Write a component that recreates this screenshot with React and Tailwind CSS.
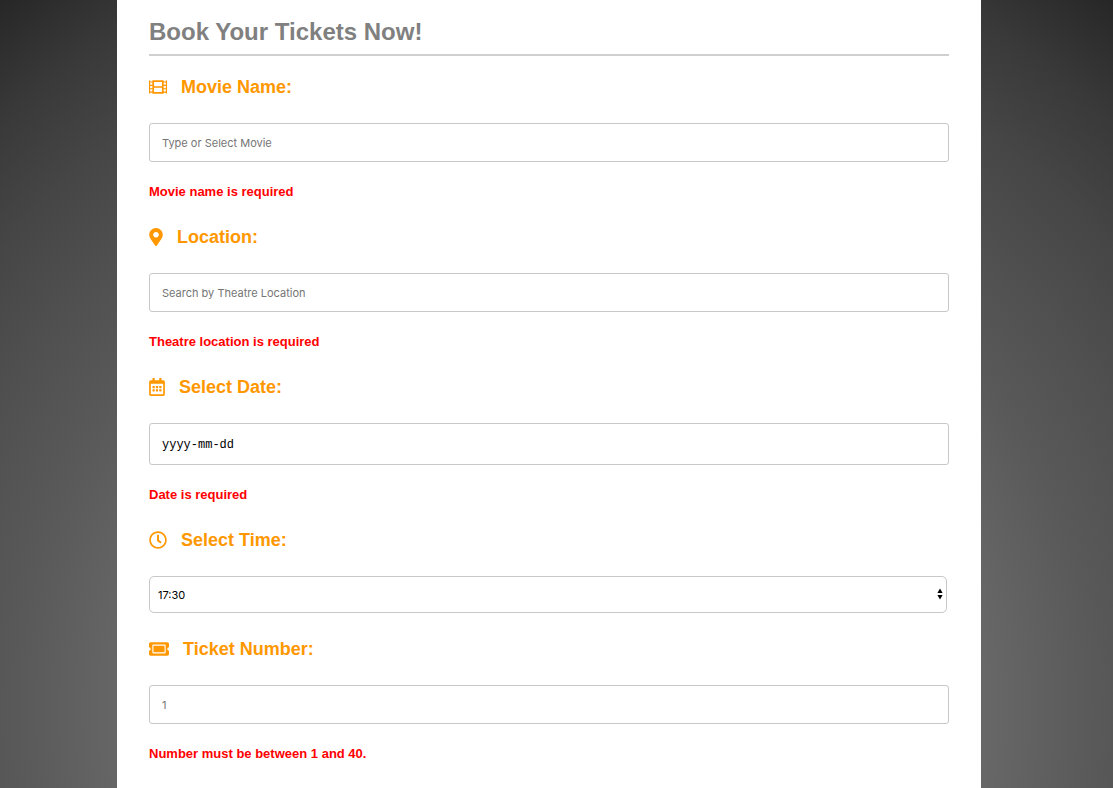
import { FaFilm, FaMapMarkerAlt, FaRegCalendarAlt, FaRegClock, FaTicketAlt } from "react-icons/fa";

const box =
  "block w-full rounded-[3px] border border-[#c8c8c8] bg-white px-3 outline-none";
const sans = "font-['Inter',sans-serif] text-[11px] placeholder:text-[#757575]";

function Field({ id, icon: Icon, iconClass, label, error, children }) {
  return (
    <div className="mb-6">
      <label
        htmlFor={id}
        className="mb-6 flex h-6 items-center gap-[14px] text-[18px] leading-6 font-bold text-[#ff9800]"
      >
        <Icon className={`h-[18px] ${iconClass}`} aria-hidden="true" />
        {label}
      </label>
      {children}
      {error && (
        <p className="mt-5 text-[13px] leading-[19px] font-bold text-[#ff0000]">{error}</p>
      )}
    </div>
  );
}

export default function App() {
  return (
    <div className="flex min-h-screen justify-center bg-[radial-gradient(circle_900px_at_50%_710px,#888888_0%,#676767_48%,#595959_60%,#505050_70%,#464646_80%,#393939_90%,#272727_100%)] pr-[15px] font-['Liberation_Sans',Arial,sans-serif]">
      <main className="w-full max-w-[864px] bg-white px-8 pt-4">
        <h1 className="mb-[19px] border-b-2 border-[#d0d0d0] pb-[6px] text-[24px] leading-8 font-bold text-[#808080]">
          Book Your Tickets Now!
        </h1>
        <form noValidate>
          <Field id="movie" icon={FaFilm} iconClass="w-[18px]" label="Movie Name:" error="Movie name is required">
            <input id="movie" type="text" placeholder="Type or Select Movie" className={`h-[39px] ${box} ${sans}`} />
          </Field>
          <Field id="location" icon={FaMapMarkerAlt} iconClass="w-[14px]" label="Location:" error="Theatre location is required">
            <input id="location" type="text" placeholder="Search by Theatre Location" className={`h-[39px] ${box} ${sans}`} />
          </Field>
          <Field id="date" icon={FaRegCalendarAlt} iconClass="w-4" label="Select Date:" error="Date is required">
            <input
              id="date"
              type="text"
              placeholder="yyyy-mm-dd"
              className={`h-[42px] pt-[2px] ${box} font-['Liberation_Mono',monospace] text-[12px] placeholder:text-black`}
            />
          </Field>
          <Field id="time" icon={FaRegClock} iconClass="w-[18px]" label="Select Time:">
            <div className="relative mr-[2px]">
              <select
                id="time"
                defaultValue="17:30"
                className="block h-[37px] w-full appearance-none rounded-[5px] border border-[#c8c8c8] bg-white px-2 pt-[2px] font-['Inter',sans-serif] text-[11px] text-black outline-none"
              >
                <option>14:30</option>
                <option>17:30</option>
                <option>20:30</option>
              </select>
              <svg
                viewBox="0 0 6 12"
                className="pointer-events-none absolute top-3 right-1 h-3 w-[6px]"
                aria-hidden="true"
              >
                <path d="M3 .5 5.6 5H.4zM3 11.5.4 7h5.2z" fill="#000" />
              </svg>
            </div>
          </Field>
          <Field id="tickets" icon={FaTicketAlt} iconClass="w-5" label="Ticket Number:" error="Number must be between 1 and 40.">
            <input id="tickets" type="text" inputMode="numeric" placeholder="1" className={`h-[39px] ${box} ${sans}`} />
          </Field>
        </form>
      </main>
    </div>
  );
}
